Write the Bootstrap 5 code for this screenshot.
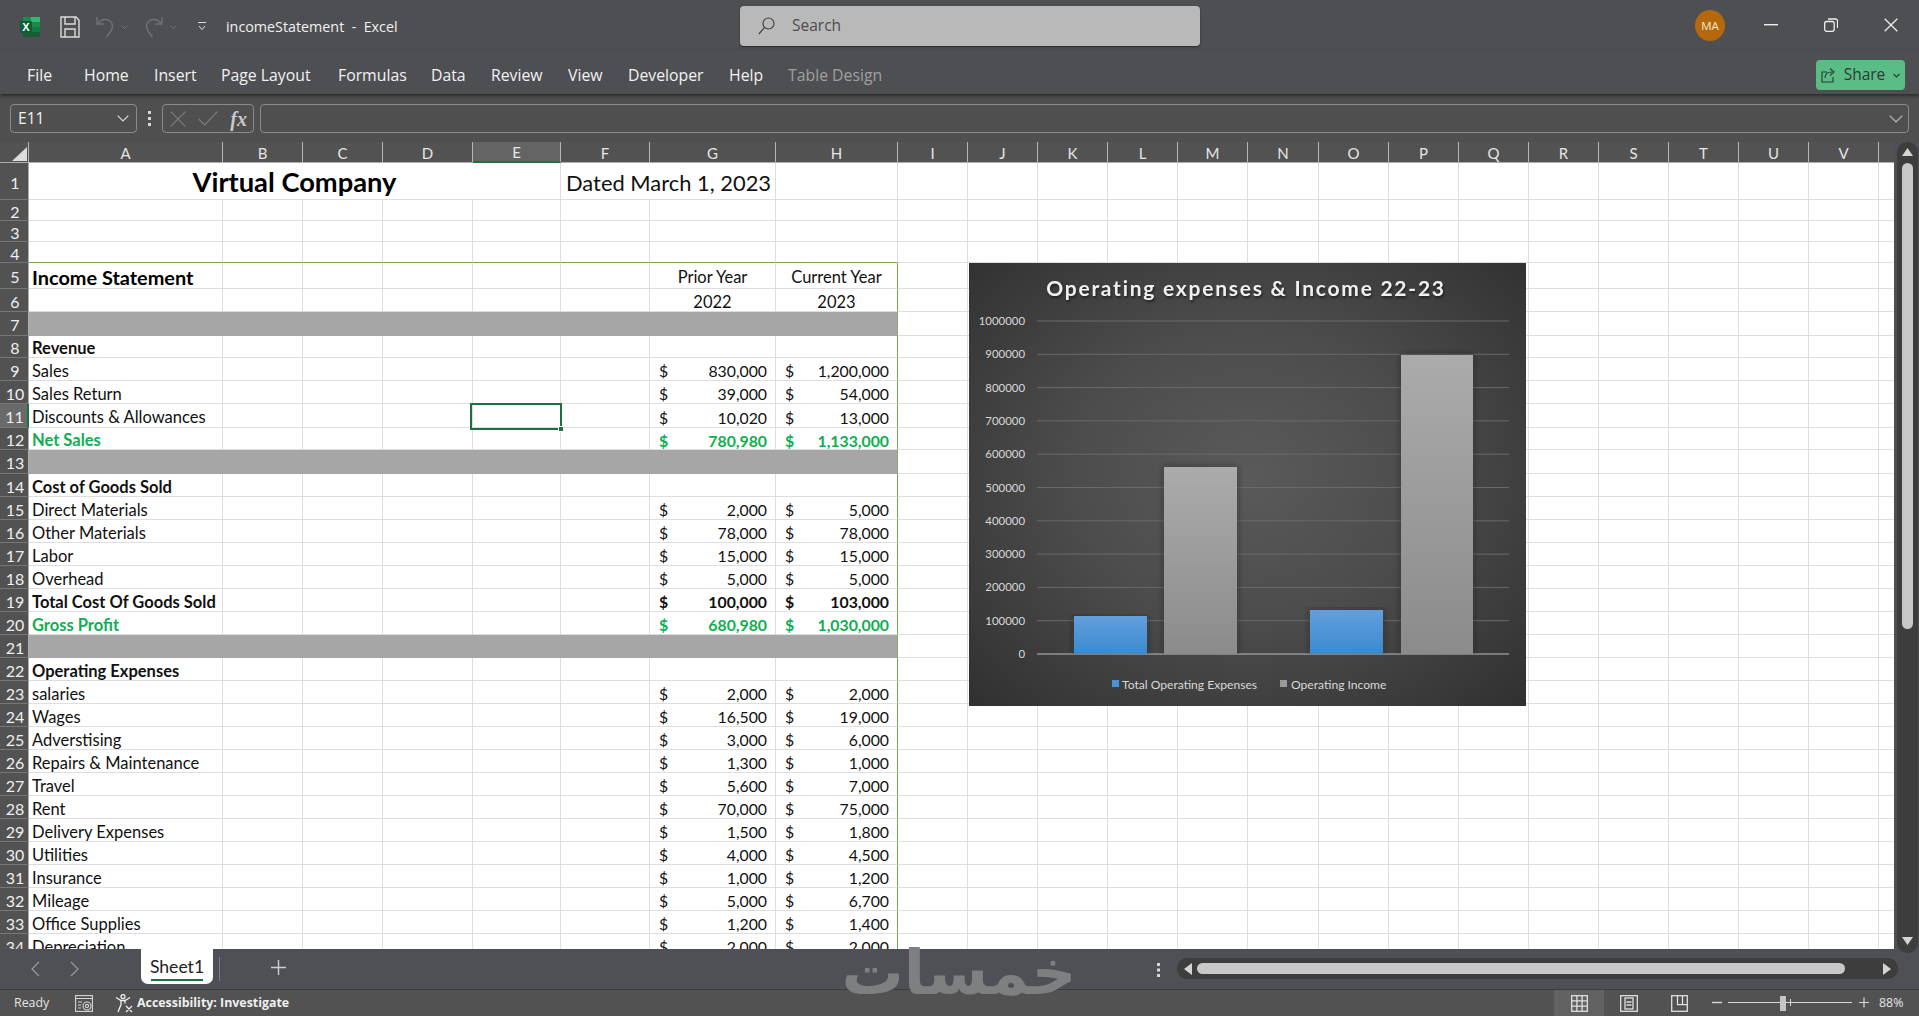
<!DOCTYPE html>
<html lang="en">
<head>
<meta charset="utf-8">
<title>incomeStatement - Excel</title>
<link href="https://cdn.jsdelivr.net/npm/bootstrap@5.3.0/dist/css/bootstrap.min.css" rel="stylesheet">
<style>
html,body{height:100%;}
body{width:1919px;height:1016px;background:#4e4f53;color:#eee;font-family:"Open Sans","Noto Sans",sans-serif;overflow:hidden;position:relative;}
svg{display:block;}
.xl-title{height:50px;background:#4e4f53;}
.xl-left{width:740px;padding-left:20px;margin-top:3px;}
.xl-save{margin-left:20px;}
.xl-undo{margin-left:16px;}
.xl-chev{margin-left:7px;}
.xl-redo{margin-left:17px;}
.xl-cust{margin-left:20px;}
.xl-name{margin-left:19px;font-size:14.3px;white-space:pre;color:#f0f0f0;}
.xl-search{width:460px;height:40px;margin-top:1px;background:#b9b9b9;border-radius:4px;box-shadow:0 1px 2px #2a2a2a;color:#4c4c4c;font-size:15.5px;padding-left:18px;gap:17px;}
.xl-avatar{width:30px;height:31px;border-radius:50%;background:#b6690c;color:#f3e9d8;font-size:11.5px;margin-left:495px;margin-top:1px;}
.xl-ribbon{height:44px;background:#4e4f53;padding-left:27px;box-shadow:0 2px 3px #2c2c2c;position:relative;z-index:2;}
.xl-tabs{display:grid;grid-template-columns:57px 70px 67px 117px 93px 60px 77px 60px 101px 59px 120px;font-size:15.8px;color:#f2f2f2;margin-top:7px;}
.xl-tab-dim{color:#a0a0a0;}
.xl-share{width:89px;height:30px;margin:6px 14px 0 auto;background:#5bbd86;border-radius:4px;color:#2b3a31;font-size:15.5px;padding:0 5px;}
.xl-fbar{height:48px;background:#4f4f4f;padding:10px 10px 9px 10px;}
.xl-box{border:1px solid #8a8a8a;border-radius:4px;height:29px;}
.xl-namebox{width:127px;padding:0 7px;font-size:15.6px;color:#f2f2f2;}
.xl-dots{width:25px;}
.xl-fx{width:92px;padding:0 6px 0 7px;}
.xl-fxtxt{font-family:"Liberation Serif",serif;font-style:italic;font-weight:700;font-size:20px;color:#c8c8c8;}
.xl-input{margin-left:6px;padding-right:5px;}
.xl-sheet{height:807px;}
.xl-clip{width:1894px;height:807px;background:#fff;overflow:hidden;position:relative;}
.xl-vbar{width:25px;background:#4f5055;position:relative;z-index:3;}
.xl-vtrack{position:absolute;left:3px;top:0;width:21px;height:811px;background:#3d3d3d;border-radius:10px;}
.xl-vthumb{position:absolute;left:5px;top:21px;width:11px;height:466px;background:#c8c8c8;border-radius:6px;}
.xl-grid{table-layout:fixed;border-collapse:separate;border-spacing:0;width:1949px;font-family:Lato,"Open Sans",sans-serif;font-size:16.5px;color:#111;}
.xl-grid td,.xl-grid th{padding:0;border-right:1px solid #dedede;border-bottom:1px solid #dedede;white-space:nowrap;line-height:1;vertical-align:middle;}
.xl-grid thead th{height:21px;background:#525252;color:#e6e6e6;font-weight:400;text-align:center;font-size:15px;padding-top:2px;border-right:1px solid #b5b5b5;border-bottom:1px solid #aeaeae;}
.xl-grid tbody th{background:#525252;color:#efefef;font-weight:400;text-align:center;font-size:16px;padding-left:2px;border-right:1px solid #aeaeae;border-bottom:1px solid #777;padding-top:3px;}
.xl-grid thead th.xl-corner{position:relative;}
.xl-corner svg{position:absolute;left:12px;top:5px;}
.xl-grid thead th.xl-selcol{background:#646464;border-bottom:2px solid #1d7044;}
.xl-grid tbody th.xl-selrow{background:#6a6a6a;border-right:2px solid #1d7044;}
.xl-txt{padding-left:3px !important;padding-top:4px !important;}
.xl-b{font-weight:700;}
.xl-g{color:#0fae52;font-weight:700;}
.xl-h1{font-size:27.3px;font-weight:700;text-align:center;color:#000;padding-top:2px !important;}
.xl-dated{font-size:21.9px;padding-left:5px !important;padding-top:4px !important;}
.xl-h5{font-size:19.9px;font-weight:700;color:#000;}
.xl-ctr{text-align:center;padding-top:4px !important;}
.xl-grid td.xl-fill{background:#a6a6a6;border-color:#a6a6a6;border-right:1px solid #8fa37f;}
.xl-grid td.xl-gb{border-bottom-color:#72a456;}
.xl-grid td.xl-gr{border-right-color:#72a456;}
.xl-acct{padding:4px 8px 0 9px;font-size:15.8px;}
.xl-sel{position:absolute;left:470px;top:261px;width:92px;height:27px;border:2px solid #1d6f42;}
.xl-sel::after{content:"";position:absolute;right:-4px;bottom:-4px;width:6px;height:6px;background:#1d6f42;border:1px solid #fff;}
.xl-chart{position:absolute;left:969px;top:121px;width:557px;height:443px;background:radial-gradient(ellipse at 50% 48%,#5a5a5a 0%,#4c4c4c 45%,#303030 100%);}
.xl-chart text{font-family:Lato,"Open Sans",sans-serif;fill:#d9d9d9;font-size:12.1px;}
.xl-chart text.xl-axlab{font-size:11.4px;}
.xl-chart text.xl-ctitle{font-size:21px;font-weight:700;letter-spacing:1.75px;fill:#f0f0f0;filter:drop-shadow(1px 2px 1px #222);}
.xl-tabsbar{height:40px;background:#4e5055;padding-left:0;position:relative;}
.xl-navs{width:141px;padding-left:29px;gap:28px;}
.xl-sheettab{width:72px;height:35px;background:#fff;border-radius:0 0 7px 7px;color:#222;font-family:Lato,"Open Sans",sans-serif;font-size:17.6px;text-align:center;padding-top:5px;position:relative;}
.xl-sheettab::after{content:"";position:absolute;left:10px;right:10px;bottom:3px;height:2px;background:#1d6f42;}
.xl-sep{width:1px;height:24px;background:#7e7e7e;margin-left:6px;margin-top:8px;}
.xl-plus{margin-left:51px;margin-top:11px;}
.xl-vdots{margin-left:871px;}
.xl-htrack{width:721px;height:21px;margin-left:17px;background:#3d3d3d;border-radius:10px;padding:0 7px;}
.xl-hthumb{width:648px;height:11px;background:#c8c8c8;border-radius:6px;margin-left:5px;}
.xl-status{height:27px;background:#525252;border-top:1px solid #3d3d3d;font-size:12.4px;color:#e4e4e4;padding-left:14px;}
.xl-ready{width:61px;}
.xl-macro{width:40px;}
.xl-acc{font-weight:700;margin-left:4px;font-size:12.4px;color:#f0f0f0;}
.xl-views{margin-left:auto;}
.xl-view{width:50px;height:26px;}
.xl-view-on{background:#626262;}
.xl-zoom{width:164px;padding-left:0;}
.xl-pct{width:43px;padding-left:3px;}
.xl-mark{position:absolute;left:838px;top:928px;width:242px;text-align:center;font-family:"DejaVu Sans",sans-serif;font-weight:700;font-size:62px;line-height:90px;color:#7e7f81;z-index:5;pointer-events:none;}
</style>
</head>
<body>
<header class="xl-title d-flex align-items-center">
  <div class="xl-left d-flex align-items-center">
    <svg width="20" height="20" viewBox="0 0 20 20"><rect x="3" width="17" height="20" rx="1" fill="#1a8a4e"/><rect x="11" width="9" height="5" fill="#37b574"/><rect x="11" y="10" width="9" height="5" fill="#107c41"/><rect x="3" y="15" width="17" height="5" fill="#185c37"/><rect y="4" width="12" height="12" rx="1" fill="#0c5f33"/><text x="6" y="14" text-anchor="middle" font-family="Liberation Sans" font-size="11" font-weight="700" fill="#fff">X</text></svg>
    <svg class="xl-save" width="20" height="22" viewBox="0 0 20 22" fill="none" stroke="#dcdcdc" stroke-width="1.4"><path d="M1 1h15l3 3v17H1z"/><path d="M5 1v7h10V1M5 21v-8h10v8"/></svg>
    <svg class="xl-undo" width="18" height="22" viewBox="0 0 18 22" fill="none" stroke="#6f7074" stroke-width="1.5"><path d="M1 1v7h7"/><path d="M1.500 8C5 3 11 2 14.500 5.500c3.500 3.500 2 9-4 15.500"/></svg>
    <svg class="xl-chev" width="7" height="4" viewBox="0 0 7 4" fill="none" stroke="#6f7074"><path d="M.5.500l3 3 3-3"/></svg>
    <svg class="xl-redo" width="18" height="22" viewBox="0 0 18 22" fill="none" stroke="#6f7074" stroke-width="1.5"><path d="M17 1v7h-7"/><path d="M16.500 8C13 3 7 2 3.500 5.500c-3.500 3.500-2 9 4 15.500"/></svg>
    <svg class="xl-chev" width="7" height="4" viewBox="0 0 7 4" fill="none" stroke="#6f7074"><path d="M.5.500l3 3 3-3"/></svg>
    <svg class="xl-cust" width="10" height="9" viewBox="0 0 10 9" fill="none" stroke="#dcdcdc"><path d="M1 .5h8M2 4l3 3.500L8 4"/></svg>
    <span class="xl-name">incomeStatement  -  Excel</span>
  </div>
  <div class="xl-search d-flex align-items-center">
    <svg width="17" height="18" viewBox="0 0 17 18" fill="none" stroke="#444" stroke-width="1.2"><circle cx="10.500" cy="6.500" r="5.500"/><path d="M6.500 10.500L.8 17"/></svg>
    <span>Search</span>
  </div>
  <div class="xl-avatar d-flex align-items-center justify-content-center">MA</div>
  <svg class="xl-winbtn" width="14" height="2" viewBox="0 0 14 2" style="margin-left:39px"><rect width="14" height="1.400" fill="#eee"/></svg>
  <svg class="xl-winbtn" width="14" height="14" viewBox="0 0 14 14" fill="none" stroke="#eee" stroke-width="1.300" style="margin-left:46px"><rect x=".7" y="3.500" width="9.500" height="9.800" rx="2"/><path d="M4 1h7.500a2 2 0 0 1 2 2v7"/></svg>
  <svg class="xl-winbtn" width="14" height="14" viewBox="0 0 14 14" fill="none" stroke="#eee" stroke-width="1.300" style="margin-left:46px"><path d="M.7.700l12.600 12.600M13.300.7L.7 13.300"/></svg>
</header>
<nav class="xl-ribbon d-flex align-items-center">
  <div class="xl-tabs">
    <span>File</span><span>Home</span><span>Insert</span><span>Page Layout</span><span>Formulas</span><span>Data</span><span>Review</span><span>View</span><span>Developer</span><span>Help</span><span class="xl-tab-dim">Table Design</span>
  </div>
  <div class="xl-share d-flex align-items-center justify-content-between">
    <svg width="15" height="16" viewBox="0 0 15 16" fill="none" stroke="#2b3a31" stroke-width="1.100"><path d="M6 5H1v10h11v-5"/><path d="M4 11c0-4 3-6 7-6M9 1.500l4 3.500-4 3.500"/></svg>
    <span>Share</span>
    <svg width="7" height="5" viewBox="0 0 7 5" fill="none" stroke="#2b3a31" stroke-width="1.100"><path d="M.5 1l3 3 3-3"/></svg>
  </div>
</nav>
<section class="xl-fbar d-flex align-items-center">
  <div class="xl-box xl-namebox d-flex align-items-center justify-content-between">
    <span>E11</span>
    <svg width="12" height="7" viewBox="0 0 12 7" fill="none" stroke="#ddd" stroke-width="1.200"><path d="M.7.700l5.300 5.300L11.300.7"/></svg>
  </div>
  <div class="xl-dots d-flex justify-content-center">
    <svg width="3" height="16" viewBox="0 0 3 16" fill="#d8d8d8"><rect width="3" height="3"/><rect y="6" width="3" height="3"/><rect y="12" width="3" height="3"/></svg>
  </div>
  <div class="xl-box xl-fx d-flex align-items-center justify-content-between">
    <svg width="16" height="16" viewBox="0 0 16 16" fill="none" stroke="#7e7e7e" stroke-width="1.200"><path d="M.7.700l14.600 14.600M15.300.7L.7 15.300"/></svg>
    <svg width="20" height="15" viewBox="0 0 20 15" fill="none" stroke="#7e7e7e" stroke-width="1.200"><path d="M.7 8l6 6L19.300.7"/></svg>
    <span class="xl-fxtxt">fx</span>
  </div>
  <div class="xl-box xl-input flex-grow-1 d-flex align-items-center justify-content-end">
    <svg width="14" height="8" viewBox="0 0 14 8" fill="none" stroke="#bdbdbd" stroke-width="1.200"><path d="M.7.700L7 7l6.300-6.300"/></svg>
  </div>
</section>
<main class="xl-sheet d-flex">
  <div class="xl-clip">
    <table class="xl-grid" id="grid"></table>
    <div class="xl-sel"></div>
    <div class="xl-chart">
      <svg width="557" height="443" viewBox="0 0 557 443">
        <text class="xl-ctitle" x="277" y="33" text-anchor="middle">Operating expenses &amp; Income 22-23</text>
        <g id="axis"></g>
        <defs>
          <linearGradient id="bl" x1="0" y1="0" x2="0" y2="1"><stop offset="0" stop-color="#639fdd"/><stop offset="1" stop-color="#3a8acf"/></linearGradient>
          <linearGradient id="gr" x1="0" y1="0" x2="0" y2="1"><stop offset="0" stop-color="#ababab"/><stop offset="1" stop-color="#8b8b8b"/></linearGradient>
          <filter id="sh" x="-20%" y="-5%" width="140%" height="105%"><feDropShadow dx="0" dy="0" stdDeviation="3" flood-color="#222" flood-opacity=".6"/></filter>
        </defs>
        <rect x="105" y="353" width="73" height="38" fill="url(#bl)" filter="url(#sh)"/>
        <rect x="195" y="204" width="73" height="187" fill="url(#gr)" filter="url(#sh)"/>
        <rect x="341" y="347" width="73" height="44" fill="url(#bl)" filter="url(#sh)"/>
        <rect x="432" y="92" width="72" height="299" fill="url(#gr)" filter="url(#sh)"/>
        <rect x="143" y="417" width="7" height="7" fill="#4a93d8"/>
        <text x="153" y="426">Total Operating Expenses</text>
        <rect x="311" y="417" width="7" height="7" fill="#999"/>
        <text x="322" y="426">Operating Income</text>
      </svg>
    </div>
  </div>
  <div class="xl-vbar">
    <div class="xl-vtrack">
      <svg class="position-absolute" style="left:5px;top:6px" width="11" height="8" viewBox="0 0 11 8" fill="#d4d4d4"><path d="M5.500 0L11 8H0z"/></svg>
      <div class="xl-vthumb"></div>
      <svg class="position-absolute" style="left:5px;top:795px" width="11" height="8" viewBox="0 0 11 8" fill="#d4d4d4"><path d="M5.500 8L11 0H0z"/></svg>
    </div>
  </div>
</main>
<section class="xl-tabsbar d-flex align-items-start">
  <div class="xl-navs d-flex align-items-center pt-2 mt-1">
    <svg width="12" height="16" viewBox="0 0 12 16" fill="none" stroke="#9a9a9a" stroke-width="1.200"><path d="M10 1L3 8l7 7"/></svg>
    <svg width="12" height="16" viewBox="0 0 12 16" fill="none" stroke="#9a9a9a" stroke-width="1.200"><path d="M2 1l7 7-7 7"/></svg>
  </div>
  <div class="xl-sheettab">Sheet1</div>
  <div class="xl-sep"></div>
  <svg class="xl-plus" width="15" height="15" viewBox="0 0 15 15" fill="none" stroke="#cfcfcf" stroke-width="1.400"><path d="M7.500 0v15M0 7.500h15"/></svg>
  <svg class="xl-vdots" style="margin-top:14px" width="3" height="14" viewBox="0 0 3 14" fill="#d8d8d8"><rect width="3" height="3"/><rect y="5.500" width="3" height="3"/><rect y="11" width="3" height="3"/></svg>
  <div class="xl-htrack d-flex align-items-center justify-content-between" style="margin-top:9px">
    <svg width="8" height="12" viewBox="0 0 8 12" fill="#d4d4d4"><path d="M0 6l8-6v12z"/></svg>
    <div class="xl-hthumb"></div>
    <svg class="ms-auto" width="8" height="12" viewBox="0 0 8 12" fill="#d4d4d4"><path d="M8 6L0 0v12z"/></svg>
  </div>
</section>
<footer class="xl-status d-flex align-items-center">
  <span class="xl-ready">Ready</span>
  <div class="xl-macro">
    <svg width="18" height="17" viewBox="0 0 18 17" fill="none" stroke="#d8d8d8" stroke-width="1.100"><rect x=".6" y=".6" width="16.800" height="15.800"/><path d="M.6 3.500h16.800M3 7h4M3 10h3M3 13h3" /><circle cx="12" cy="11" r="4" fill="#525252"/><circle cx="12" cy="11" r="1.600"/></svg>
  </div>
  <svg width="18" height="19" viewBox="0 0 18 19" fill="none" stroke="#f0f0f0" stroke-width="1.300"><circle cx="8" cy="2.600" r="2"/><path d="M1 3.500l5 3h4l5-3M6 6.500v4L3 18M10 6.500v3M11 12l6 6M17 12l-6 6"/></svg>
  <span class="xl-acc">Accessibility: Investigate</span>
  <div class="xl-views d-flex align-items-center">
    <div class="xl-view xl-view-on d-flex align-items-center justify-content-center">
      <svg width="17" height="17" viewBox="0 0 17 17" fill="none" stroke="#e0e0e0" stroke-width="1.300"><rect x=".7" y=".7" width="15.600" height="15.600"/><path d="M5.900.7v15.600M11.100.7v15.600M.7 5.900h15.600M.7 11.100h15.600"/></svg>
    </div>
    <div class="xl-view d-flex align-items-center justify-content-center">
      <svg width="18" height="17" viewBox="0 0 18 17" fill="none" stroke="#e0e0e0" stroke-width="1.300"><rect x=".7" y=".7" width="16.600" height="15.600"/><rect x="5" y="3" width="8" height="11"/><path d="M6.500 7h5M6.500 10h5"/></svg>
    </div>
    <div class="xl-view d-flex align-items-center justify-content-center">
      <svg width="17" height="17" viewBox="0 0 17 17" fill="none" stroke="#e0e0e0" stroke-width="1.300"><rect x=".7" y=".7" width="15.600" height="15.600"/><path d="M6.500.7v9h9.800M11.500.7v9"/></svg>
    </div>
    <div class="xl-zoom position-relative" style="height:26px;margin-left:8px">
      <svg width="164" height="26" viewBox="0 0 164 26" fill="none" stroke="#d8d8d8">
        <path d="M0 12.500h10" stroke-width="1.400"/>
        <path d="M16 12.500h124"/>
        <rect x="68" y="6" width="6" height="15" fill="#c4c4c4" stroke="none"/>
        <path d="M78.500 9v7"/>
        <path d="M147 12.500h10M152 7.500v10" stroke-width="1.200"/>
      </svg>
    </div>
    <span class="xl-pct">88%</span>
  </div>
</footer>
<div class="xl-mark" dir="rtl">خمسات</div>
<script>
var colW=[29,194,80,80,90,88,89,126,122,70,70,70,70,70,71,70,70,70,70,70,70,70,70,70];
var letters=" ABCDEFGHIJKLMNOPQRSTUV ";
var rowH={1:38,2:21,3:21,4:21,5:26,6:23,7:24,8:22,9:23,10:23,11:24,12:22,13:24};
var data={
 8:["Revenue","b"],9:["Sales","",'830,000','1,200,000'],10:["Sales Return","",'39,000','54,000'],
 11:["Discounts & Allowances","",'10,020','13,000'],12:["Net Sales","g",'780,980','1,133,000'],
 14:["Cost of Goods Sold","b"],15:["Direct Materials","",'2,000','5,000'],16:["Other Materials","",'78,000','78,000'],
 17:["Labor","",'15,000','15,000'],18:["Overhead","",'5,000','5,000'],19:["Total Cost Of Goods Sold","b",'100,000','103,000'],
 20:["Gross Profit","g",'680,980','1,030,000'],22:["Operating Expenses","b"],23:["salaries","",'2,000','2,000'],
 24:["Wages","",'16,500','19,000'],25:["Adverstising","",'3,000','6,000'],26:["Repairs & Maintenance","",'1,300','1,000'],
 27:["Travel","",'5,600','7,000'],28:["Rent","",'70,000','75,000'],29:["Delivery Expenses","",'1,500','1,800'],
 30:["Utilities","",'4,000','4,500'],31:["Insurance","",'1,000','1,200'],32:["Mileage","",'5,000','6,700'],
 33:["Office Supplies","",'1,200','1,400'],34:["Depreciation","",'2,000','2,000']};
var fills={7:1,13:1,21:1};
function blanks(from,to,extra){var s="";for(var i=from;i<=to;i++){var c="";if(extra&&extra[i])c=extra[i];s+='<td'+(c?' class="'+c+'"':'')+'></td>';}return s;}
function esc(t){return t.replace(/&/g,"&amp;");}
function acct(v,cls){return '<td class="'+cls+'"><div class="xl-acct d-flex justify-content-between"><span>$</span><span>'+v+'</span></div></td>';}
var cg='<colgroup>';colW.forEach(function(w){cg+='<col style="width:'+w+'px">';});cg+='</colgroup>';
var h='<thead><tr>';
colW.forEach(function(w,i){var c=i==0?'xl-corner':(i==5?'xl-selcol':'');h+='<th class="'+c+'">'+(i==0?'<svg width="15" height="14" viewBox="0 0 15 14"><path d="M15 0v14H0z" fill="#dcdcdc"/></svg>':letters.charAt(i).trim())+'</th>';});
h+='</tr></thead><tbody>';
for(var r=1;r<=34;r++){
  var ht=rowH[r]||23;
  if(r==1)ht=37;
  h+='<tr style="height:'+ht+'px"><th class="'+(r==11?'xl-selrow':'')+'">'+r+'</th>';
  if(r==1){
    h+='<td class="xl-h1" colspan="5">Virtual Company</td><td class="xl-dated" colspan="2">Dated March 1, 2023</td><td></td>'+blanks(9,23);
  }else if(r==2||r==3){
    h+=blanks(1,23);
  }else if(r==4){
    h+=blanks(1,8,{1:'xl-gb',2:'xl-gb',3:'xl-gb',4:'xl-gb',5:'xl-gb',6:'xl-gb',7:'xl-gb',8:'xl-gb'})+blanks(9,23);
  }else if(r==5){
    h+='<td class="xl-txt xl-h5">Income Statement</td>'+blanks(2,6)+'<td class="xl-ctr">Prior Year</td><td class="xl-ctr xl-gr">Current Year</td>'+blanks(9,23);
  }else if(r==6){
    h+=blanks(1,6)+'<td class="xl-ctr">2022</td><td class="xl-ctr xl-gr">2023</td>'+blanks(9,23);
  }else if(fills[r]){
    h+='<td class="xl-fill" colspan="8"></td>'+blanks(9,23);
  }else{
    var d=data[r];
    var cls=d[1]=='b'?'xl-b':(d[1]=='g'?'xl-g':'');
    h+='<td class="xl-txt '+cls+'">'+esc(d[0])+'</td>'+blanks(2,6);
    if(d[2]){h+=acct(d[2],cls)+acct(d[3],'xl-gr '+cls);}else{h+='<td></td><td class="xl-gr"></td>';}
    h+=blanks(9,23);
  }
  h+='</tr>';
}
h+='</tbody>';
document.getElementById('grid').innerHTML=cg+h;
var ax="";
for(var i=0;i<=10;i++){
  var y=391-i*33.3;
  ax+='<path d="M68 '+y+'H540" stroke="'+(i==0?'#bdbdbd':'#6a6a6a')+'" stroke-width="1" fill="none"/>';
  ax+='<text class="xl-axlab" x="56" y="'+(y+4)+'" text-anchor="end">'+(i==0?'0':(i*100000))+'</text>';
}
document.getElementById('axis').innerHTML=ax;
</script>
</body>
</html>
